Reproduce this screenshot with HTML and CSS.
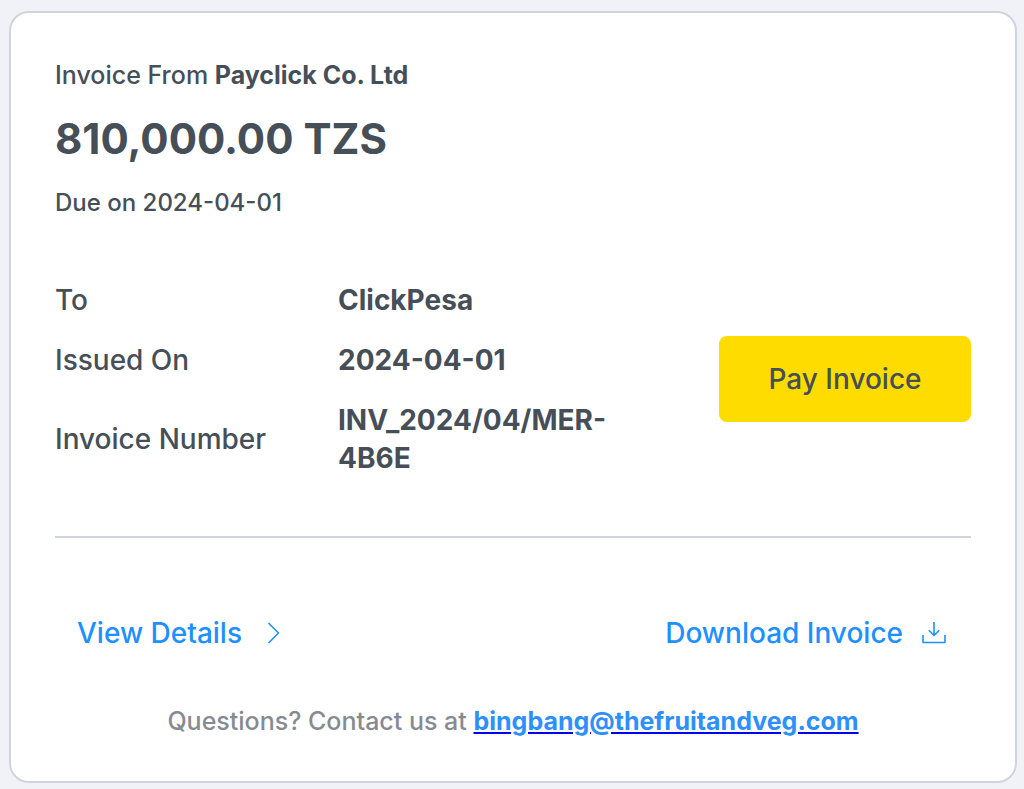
FILE: index.html
```html
<!DOCTYPE html>
<html lang="en">
<head>
    <meta charset="UTF-8">
    <meta name="viewport" content="width=device-width, initial-scale=1.0">
    <title>Invoice From Payclick Co. Ltd</title>
    <link rel="stylesheet" href="styles.css">
</head>
<body>
    <main class="invoice-card">
        <header class="invoice-header">
            <p class="small-text">Invoice From <strong>Payclick Co. Ltd</strong></p>
            <h1 class="amount">810,000.00 TZS</h1>
            <p class="small-text due-date">Due on 2024-04-01</p>
        </header>

        <section class="invoice-summary">
            <table class="invoice-table">
                <tbody>
                    <tr>
                        <th scope="row">To</th>
                        <td>ClickPesa</td>
                    </tr>
                    <tr>
                        <th scope="row">Issued On</th>
                        <td>2024-04-01</td>
                    </tr>
                    <tr>
                        <th scope="row">Invoice Number</th>
                        <td>INV_2024/04/MER-4B6E</td>
                    </tr>
                </tbody>
            </table>
            <button type="button" class="pay-button">Pay Invoice</button>
        </section>

        <nav class="invoice-links">
            <a class="action-link" href="#details">
                View Details
                <svg class="icon" viewBox="0 0 26 26" aria-hidden="true">
                    <path d="M8.5 3l10 10-10 10"/>
                </svg>
            </a>
            <a class="action-link" href="#download">
                Download Invoice
                <svg class="icon" viewBox="0 0 26 26" aria-hidden="true">
                    <path d="M13 2v13.5M7.8 10.3l5.2 5.2 5.2-5.2"/>
                    <path d="M2 15v7.5h22V15"/>
                </svg>
            </a>
        </nav>

        <footer class="invoice-footer small-text">
            Questions? Contact us at
            <a class="contact-link" href="mailto:bingbang@thefruitandveg.com"><span>bingbang@thefruitandveg.com</span></a>
        </footer>
    </main>
</body>
</html>
```

FILE: styles.css
```css
* {
    box-sizing: border-box;
}
body {
    margin: 0;
    padding: 11px 7px 6px 9px;
    background: #f0f2f7;
    color: #464f58;
    font-family: Inter, "Liberation Sans", sans-serif;
    font-weight: 500;
}
.invoice-card {
    padding: 45px 44px 43px;
    background: #fff;
    border: 2px solid #d0d4df;
    border-radius: 20px;
}
.small-text {
    margin: 0;
    font-size: 25px;
    line-height: 34px;
}
.small-text strong {
    font-weight: 700;
}
.due-date {
    font-size: 24px;
}
.amount {
    margin: 18px 0;
    font-size: 42px;
    line-height: 58px;
    font-weight: 700;
}
.invoice-summary {
    display: flex;
    justify-content: space-between;
    align-items: center;
    margin-top: 50px;
    padding-bottom: 48px;
    border-bottom: 2px solid #d0d4df;
}
.invoice-table {
    width: 580px;
    table-layout: fixed;
    border-collapse: collapse;
    font-size: 28px;
    line-height: 38px;
}
.invoice-table th,
.invoice-table td {
    padding: 11px 0;
    text-align: left;
    vertical-align: middle;
}
.invoice-table th {
    width: 283px;
    font-weight: 500;
}
.invoice-table td {
    font-weight: 700;
}
.pay-button {
    width: 252px;
    height: 86px;
    border: none;
    border-radius: 8px;
    background: #ffdc00;
    color: inherit;
    font: inherit;
    font-size: 28px;
    cursor: pointer;
}
.invoice-links {
    display: flex;
    justify-content: space-between;
    padding: 76px 24px 52px 22px;
}
.action-link {
    display: flex;
    align-items: center;
    gap: 18px;
    color: #1e90ff;
    font-size: 28px;
    line-height: 38px;
    text-decoration: none;
}
.icon {
    width: 26px;
    height: 26px;
    fill: none;
    stroke: currentColor;
    stroke-width: 1.6;
    stroke-linejoin: round;
}
.invoice-footer {
    color: #868b91;
    text-align: center;
}
.contact-link {
    color: #0000ee;
    font-weight: 700;
    text-decoration: underline;
}
.contact-link span {
    color: #2e90ff;
}
```
